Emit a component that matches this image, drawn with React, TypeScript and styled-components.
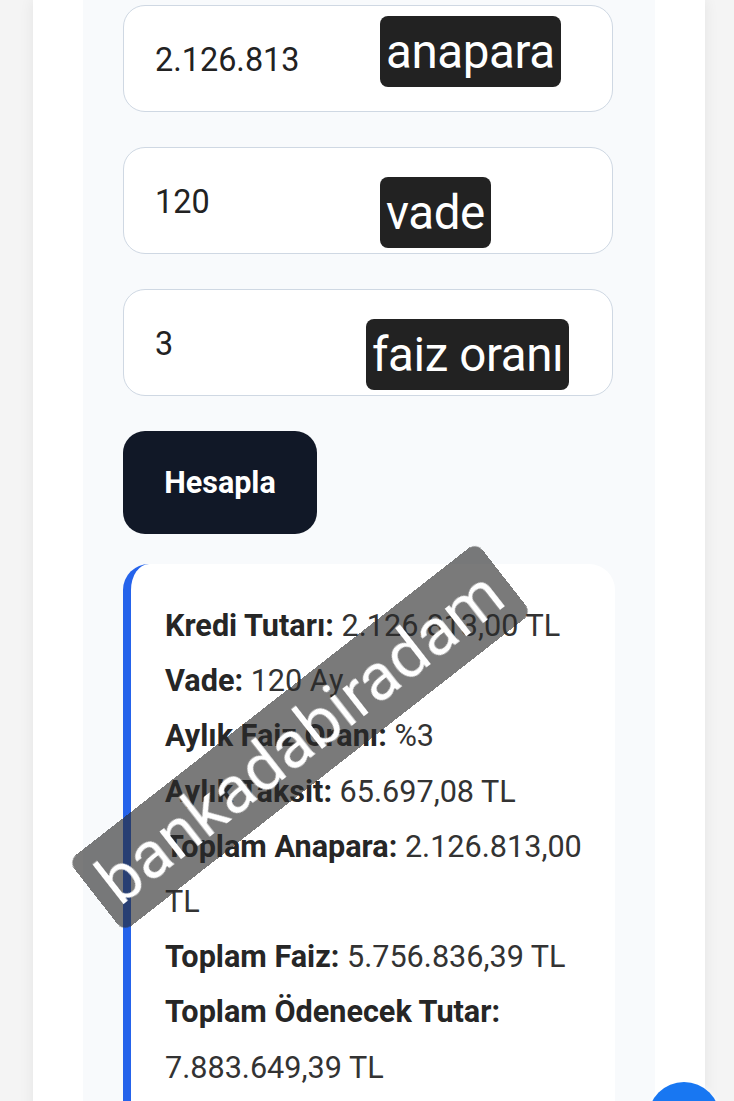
import React from "react";
import styled, { createGlobalStyle } from "styled-components";

const GlobalStyle = createGlobalStyle`
  html, body {
    margin: 0;
    padding: 0;
    background: #f4f4f4;
    font-family: Roboto, "Noto Sans", Arial, sans-serif;
  }
  * { box-sizing: border-box; }
`;

const Page = styled.div`
  width: 672px;
  margin: 0 0 0 33px;
  min-height: 1101px;
  background: #ffffff;
  box-shadow: 0 0 14px rgba(0, 0, 0, 0.07);
  overflow: hidden;
`;

const Panel = styled.div`
  margin: 0 50px;
  padding: 5px 40px 60px 40px;
  min-height: 1101px;
  background: #f8fafc;
  display: flex;
  flex-direction: column;
  gap: 35px;
`;

const Field = styled.div`
  position: relative;
  width: 490px;
  height: 107px;
  background: #ffffff;
  border: 1.5px solid #cfd8e3;
  border-radius: 22px;
  display: flex;
  align-items: center;
  padding: 2px 0 0 31px;
  font-size: 32.4px;
  color: #222222;
`;

const Tag = styled.span<{ $left: number; $top: number }>`
  position: absolute;
  left: ${({ $left }) => $left}px;
  top: ${({ $top }) => $top}px;
  height: 71px;
  padding: 0 6px;
  background: #222222;
  border-radius: 8px;
  color: #ffffff;
  font-size: 47.5px;
  line-height: 66px;
  letter-spacing: -0.4px;
  display: flex;
  align-items: center;
`;

const Button = styled.button`
  width: 194px;
  height: 103px;
  border: none;
  border-radius: 22px;
  background: #111827;
  color: #ffffff;
  font-family: Roboto, Arial, sans-serif;
  font-size: 30.5px;
  font-weight: 700;
  margin-bottom: -5px;
`;

const Card = styled.div`
  width: 492px;
  background: #ffffff;
  border-left: 8px solid #2563eb;
  border-radius: 26px;
  padding: 34px 26px 40px 34px;
`;

const Line = styled.p`
  margin: 0;
  font-size: 30.6px;
  line-height: 55.2px;
  color: #333333;
`;

const Key = styled.strong`
  font-weight: 700;
  color: #262626;
`;

const Watermark = styled.div`
  position: fixed;
  left: 41px;
  top: 692px;
  width: 518px;
  height: 90px;
  transform: rotate(-38deg);
  background: rgba(40, 40, 40, 0.62);
  border-radius: 10px;
  color: #ffffff;
  font-size: 66px;
  display: flex;
  align-items: center;
  justify-content: center;
  pointer-events: none;
`;

const Fab = styled.div`
  position: fixed;
  right: 14px;
  bottom: -53px;
  width: 72px;
  height: 72px;
  border-radius: 50%;
  background: #1877f2;
  box-shadow: 0 0 6px rgba(255, 255, 255, 0.9);
`;

const fields = [
  { value: "2.126.813", tag: "anapara", left: 256, top: 10 },
  { value: "120", tag: "vade", left: 256, top: 29 },
  { value: "3", tag: "faiz oranı", left: 242, top: 29 },
];

const results: [string, string][] = [
  ["Kredi Tutarı:", "2.126.813,00 TL"],
  ["Vade:", "120 Ay"],
  ["Aylık Faiz Oranı:", "%3"],
  ["Aylık Taksit:", "65.697,08 TL"],
  ["Toplam Anapara:", "2.126.813,00 TL"],
  ["Toplam Faiz:", "5.756.836,39 TL"],
  ["Toplam Ödenecek Tutar:", "7.883.649,39 TL"],
];

const App = () => {
  return (
    <>
      <GlobalStyle />
      <Page>
        <Panel>
          {fields.map((f) => (
            <Field key={f.tag}>
              {f.value}
              <Tag $left={f.left} $top={f.top}>
                {f.tag}
              </Tag>
            </Field>
          ))}
          <Button>Hesapla</Button>
          <Card>
            {results.map(([k, v]) => (
              <Line key={k}>
                <Key>{k}</Key> {v}
              </Line>
            ))}
          </Card>
        </Panel>
      </Page>
      <Watermark>bankadabiradam</Watermark>
      <Fab />
    </>
  );
};

export default App;
